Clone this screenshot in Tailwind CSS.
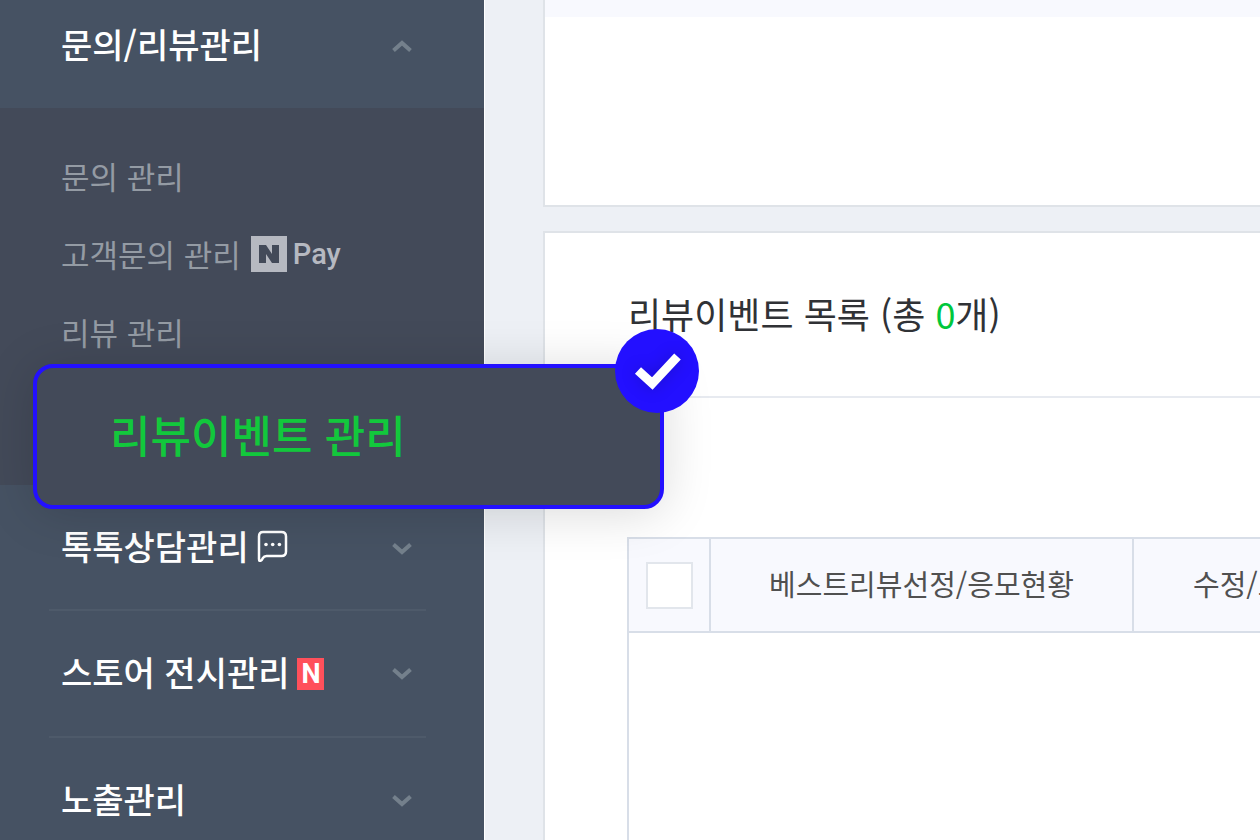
<!DOCTYPE html>
<html lang="ko">
<head>
<meta charset="utf-8">
<meta name="viewport" content="width=device-width, initial-scale=1">
<title>리뷰이벤트 관리</title>
<script src="https://cdn.jsdelivr.net/npm/@tailwindcss/browser@4"></script>
</head>
<body class="flex h-screen overflow-hidden bg-[#edf0f5] font-['Noto_Sans_CJK_KR',sans-serif]">
<aside class="relative z-10 w-[484px] shrink-0 bg-[#465263] text-[34px] leading-[48px] font-medium text-white">
  <nav aria-label="관리 메뉴">
    <button type="button" aria-expanded="true" class="flex h-[108px] w-full items-center justify-between pr-[72px] pb-4 pl-[61px] text-left">
      <span class="pb-1">문의/리뷰관리</span>
      <svg class="w-5 shrink-0 text-[#74808c]" viewBox="0 0 20 12" fill="none" stroke="currentColor" stroke-width="4" aria-hidden="true"><path d="M1.500 10.500 10 3l8.500 7.500"/></svg>
    </button>
    <ul class="h-[377px] bg-[#434a59] pt-[29px] text-[31px] font-normal text-[#949ba4]">
      <li class="flex h-[78px] items-center pl-[61px]"><a href="#inquiry">문의 관리</a></li>
      <li class="flex h-[78px] items-center pl-[61px]">
        <a href="#customer" class="flex items-center gap-[10px]">고객문의 관리
          <span class="flex items-center gap-[6px] text-[#b6b9c1]">
            <svg class="size-9" viewBox="0 0 36 36" aria-hidden="true"><path fill="#b6b9c1" d="M0 0h36v36H0z"/><path fill="#434a59" d="M8 9h7l6 9V9h7v18h-7l-6-9v9H8z"/></svg>
            <span class="font-['Roboto',sans-serif] text-[29px] font-medium">Pay</span>
          </span>
        </a>
      </li>
      <li class="flex h-[78px] items-center pl-[61px]"><a href="#review">리뷰 관리</a></li>
      <li class="relative h-[78px]">
        <a href="#review-event" aria-current="page" class="absolute -top-[7px] left-[33px] flex h-[145px] w-[631px] items-center rounded-[20px] border-4 border-[#2310ff] bg-[#434a59] pb-[6px] pl-[73px] text-[44px] leading-[64px] font-medium whitespace-nowrap text-[#12c83c] shadow-[0_4px_50px_rgba(0,0,0,0.15)]">리뷰이벤트 관리
          <span class="absolute -top-[39px] -right-[39px] flex size-[84px] items-center justify-center rounded-full bg-[#2310ff]">
            <svg class="size-[84px] drop-shadow-[0_0_8px_rgba(0,0,0,0.2)]" viewBox="0 0 84 84" fill="none" stroke="#fff" stroke-width="9" aria-hidden="true"><path d="M23 41.500 37.300 54.500 62.500 27.500"/></svg>
          </span>
        </a>
      </li>
    </ul>
    <button type="button" aria-expanded="false" class="flex h-[124px] w-full items-center justify-between pr-[72px] pl-[61px] text-left">
      <span class="flex items-center gap-2 pb-[2px]">톡톡상담관리
        <svg class="size-8" viewBox="0 0 32 32" fill="none" stroke="currentColor" stroke-width="2.500" stroke-linejoin="round" aria-hidden="true"><path d="M6 2H24.500Q29 2 29 6.500V21.500Q29 26 24.500 26H9.500Q7 26 5.800 28.200 4.800 30.500 3 31 2 31 2 29V6.500Q2 2 6 2Z"/><g fill="currentColor" stroke="none"><circle cx="9" cy="14.500" r="1.800"/><circle cx="15.700" cy="14.500" r="1.800"/><circle cx="22.400" cy="14.500" r="1.800"/></g></svg>
      </span>
      <svg class="mt-1 w-5 shrink-0 text-[#74808c]" viewBox="0 0 20 12" fill="none" stroke="currentColor" stroke-width="4" aria-hidden="true"><path d="M1.500 1.500 10 9l8.500-7.500"/></svg>
    </button>
    <hr class="mr-[58px] ml-[49px] border-t-2 border-[#4e5a6a]">
    <button type="button" aria-expanded="false" class="flex h-[125px] w-full items-center justify-between pr-[72px] pl-[61px] text-left">
      <span class="flex items-center gap-2 pb-[3px]">스토어 전시관리
        <span class="mt-[3px] flex h-8 w-[27px] items-center justify-center bg-[#ff505b] font-['Roboto',sans-serif] text-[27px] leading-8 font-bold">N</span>
      </span>
      <svg class="w-5 shrink-0 text-[#74808c]" viewBox="0 0 20 12" fill="none" stroke="currentColor" stroke-width="4" aria-hidden="true"><path d="M1.500 1.500 10 9l8.500-7.500"/></svg>
    </button>
    <hr class="mr-[58px] ml-[49px] border-t-2 border-[#4e5a6a]">
    <button type="button" aria-expanded="false" class="flex h-[125px] w-full items-center justify-between pr-[72px] pl-[61px] text-left">
      <span class="pb-[3px]">노출관리</span>
      <svg class="w-5 shrink-0 text-[#74808c]" viewBox="0 0 20 12" fill="none" stroke="currentColor" stroke-width="4" aria-hidden="true"><path d="M1.500 1.500 10 9l8.500-7.500"/></svg>
    </button>
  </nav>
</aside>
<main class="flex min-w-0 grow flex-col gap-6 overflow-hidden border-l border-white pl-[58px]">
  <section class="h-[207px] shrink-0 border-b-2 border-l-2 border-[#dfe3e8] bg-white">
    <div class="h-[17px] bg-[#f8f9fe]"></div>
  </section>
  <section class="flex grow flex-col border-t-2 border-l-2 border-[#dfe3e8] bg-white">
    <header class="flex h-[165px] shrink-0 items-center border-b-2 border-[#e7eaf0] pb-1 pl-[83px]">
      <h1 class="text-[36px] leading-[52px] whitespace-nowrap text-[#303236]">리뷰이벤트 목록 (총 <span class="text-[#00c73c]">0</span>개)</h1>
    </header>
    <div class="mt-[139px] ml-[82px] flex grow border-l-2 border-[#d8dee8]">
      <table class="h-[94px] w-[1000px] shrink-0 table-fixed border-collapse text-[29px] leading-10 text-[#505050]">
        <thead>
          <tr class="h-[94px] border-y-2 border-[#d8dee8] bg-[#f8f9fe]">
            <th scope="col" class="w-[81px] border-r-2 border-[#d8dee8] p-0"><input type="checkbox" aria-label="전체 선택" class="mx-auto block size-[47px] appearance-none border-2 border-[#e2e6ec] bg-white"></th>
            <th scope="col" class="w-[423px] border-r-2 border-[#d8dee8] p-0 pb-1 font-normal">베스트리뷰선정/응모현황</th>
            <th scope="col" class="p-0 pb-1 pl-[59px] text-left font-normal">수정/보기</th>
          </tr>
        </thead>
      </table>
    </div>
  </section>
</main>
</body>
</html>
